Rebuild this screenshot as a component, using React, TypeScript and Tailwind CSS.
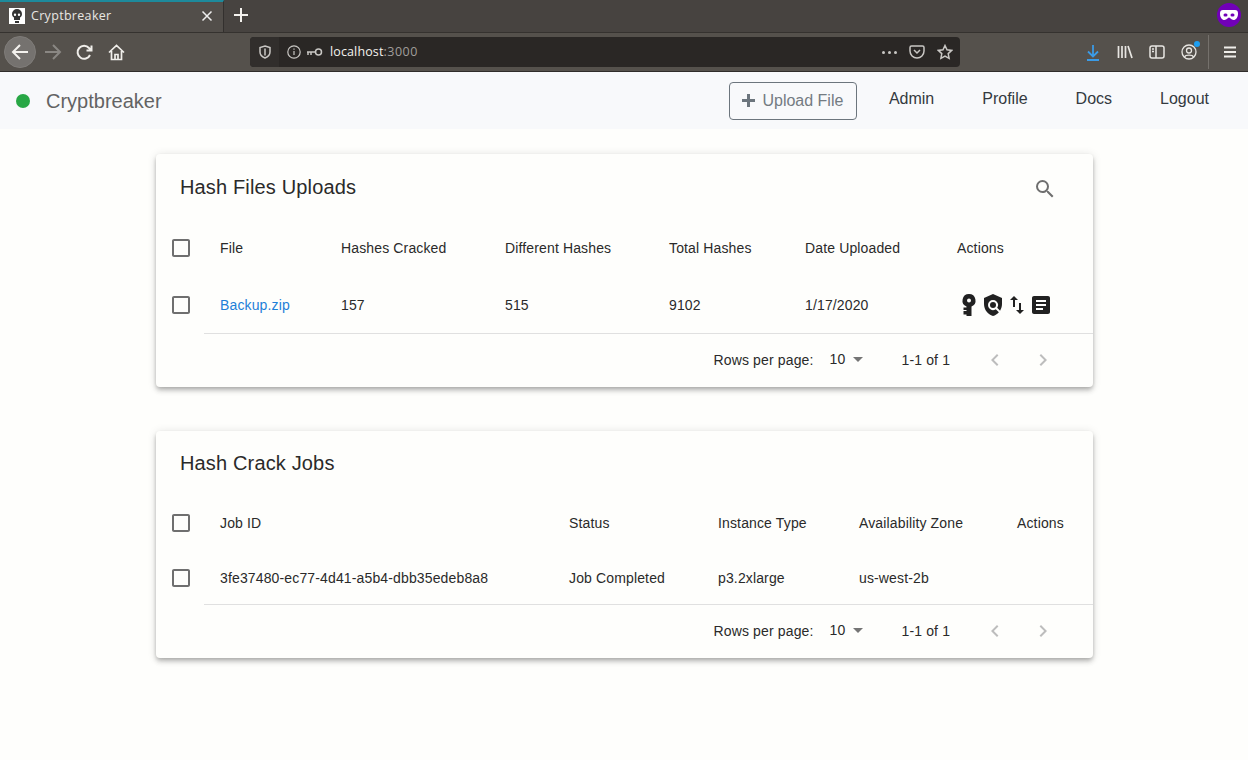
import React from 'react';
import { MdArticle, MdCheckBoxOutlineBlank, MdChevronLeft, MdChevronRight, MdImportExport, MdPolicy, MdSearch, MdArrowDropDown } from 'react-icons/md';

const chrome = { fontFamily: '"Open Sans", "Noto Sans", sans-serif' };

function Checkbox() {
  return <MdCheckBoxOutlineBlank size={24} className="text-[#6f6f6f] shrink-0 ml-[13px]" />;
}

function KeyIcon() {
  return (
    <svg width="24" height="24" viewBox="0 0 24 24" fill="#212121">
      <path fillRule="evenodd" d="M12 1a6.500 6.500 0 0 1 2.500 12.500V23H9.500v-1.500H6.500V18h3v-1H6.500v-2.500h3v-1A6.500 6.500 0 0 1 12 1zm0 4.500a2 2 0 1 0 0 4 2 2 0 0 0 0-4z" />
    </svg>
  );
}

function Footer() {
  return (
    <div className="flex items-center h-[53px] pb-px text-sm text-[#2a2a2a] tracking-[0.01em]">
      <span className="ml-[558px] w-[116px]">Rows per page:</span>
      <span className="w-[16px] -translate-y-px">10</span>
      <MdArrowDropDown size={24} className="text-[#757575] -translate-y-[1px]" />
      <span className="ml-[32px] w-[49px]">1-1 of 1</span>
      <MdChevronLeft size={24} className="text-[#bdbdbd] ml-[32px]" />
      <MdChevronRight size={24} className="text-[#bdbdbd] ml-[24px]" />
    </div>
  );
}

export default function App() {
  return (
    <div className="min-h-screen bg-[#fefefc] font-['Liberation_Sans',Arial,sans-serif]">
      {/* browser chrome */}
      <div className="h-[32px] bg-[#474340] flex text-[#f4f2ee]" style={chrome}>
        <div className="w-[224px] h-[32px] bg-[#524e4a] border-t-2 border-t-[#1d8a9c] flex items-center pb-[2px] pl-[9px] border-r border-r-[#33302e]">
          <div className="w-4 h-4 bg-white flex items-center justify-center">
            <svg width="12" height="14" viewBox="0 0 12 14" fill="#333"><path d="M6 0a5 5 0 0 0-5 5c0 2 1 3 2 3.600V11h6V8.600C10 8 11 7 11 5a5 5 0 0 0-5-5zM4 4.500a1.200 1.200 0 1 1 0 2.400 1.200 1.200 0 0 1 0-2.400zm4 0a1.200 1.200 0 1 1 0 2.400 1.200 1.200 0 0 1 0-2.400zM4 12h4v2H4z"/></svg>
          </div>
          <span className="ml-[6px] text-[12.5px] tracking-wide text-[#e8e6e2]">Cryptbreaker</span>
          <svg className="ml-[89px]" width="12" height="12" viewBox="0 0 12 12" stroke="#eee" strokeWidth="1.5"><path d="M1.500 1.500l9 9M10.500 1.500l-9 9" /></svg>
        </div>
        <svg className="ml-[9px] mt-[7px]" width="16" height="16" viewBox="0 0 16 16" stroke="#f4f2ee" strokeWidth="2"><path d="M8 1v14M1 8h14" /></svg>
        <div className="flex-1" />
        <div className="w-[24px] h-[24px] mt-[3px] mr-[7px] rounded-full bg-[#7100b8] flex items-center justify-center">
          <svg width="18" height="10" viewBox="0 0 18 10"><path fillRule="evenodd" fill="#fff" d="M3 0h12c2 0 3 1 3 3.500C18 7.500 16 10 13.500 10 11 10 10.500 7.500 9 7.500S7 10 4.500 10C2 10 0 7.500 0 3.500 0 1 1 0 3 0zm2 3.500a1.500 1.500 0 1 0 0 3h1a1.500 1.500 0 0 0 0-3zm7 0a1.500 1.500 0 1 0 0 3h1a1.500 1.500 0 0 0 0-3z"/></svg>
        </div>
      </div>
      <div className="h-[40px] bg-[#55514c] border-t border-t-[#35322f] border-b border-b-[#2f2c2a] flex items-center relative" style={chrome}>
        <div className="ml-[4px] w-8 h-8 rounded-full bg-[#75726f] border border-[#7f7c79] flex items-center justify-center">
          <svg width="18" height="18" viewBox="0 0 18 18" fill="none" stroke="#f4f2ee" strokeWidth="2"><path d="M17 9H2M9 2L2 9l7 7" /></svg>
        </div>
        <svg className="ml-[8px]" width="18" height="18" viewBox="0 0 18 18" fill="none" stroke="#8a8783" strokeWidth="2"><path d="M1 9h15M9 2l7 7-7 7" /></svg>
        <svg className="ml-[14px]" width="17" height="17" viewBox="0 0 17 17" fill="none" stroke="#f0eeea" strokeWidth="2"><path d="M14 11a6.500 6.500 0 1 1-1-7l2 2M15.500 1.500V6.500H10.500" /></svg>
        <svg className="ml-[15px]" width="17" height="17" viewBox="0 0 17 17" fill="none" stroke="#f0eeea" strokeWidth="1.700"><path d="M1 8.500L8.500 1.500l7.500 7M3.500 7v8.500h10V7M7 15.500v-5h3v5" /></svg>
        <div className="ml-[125px] w-[710px] h-[30px] bg-[#2a2725] rounded flex items-center text-[#f4f2ee]">
          <div className="w-[29px] h-[30px] bg-[#312e2c] rounded-l flex items-center justify-center">
            <svg width="12" height="14" viewBox="0 0 12 14" fill="none" stroke="#c9c7c4" strokeWidth="1.500"><path d="M6 1l5 1.500V7c0 3-2.500 5-5 6-2.500-1-5-3-5-6V2.500zM6 3.500V10.500" /></svg>
          </div>
          <svg className="ml-[8px]" width="14" height="14" viewBox="0 0 14 14" fill="none" stroke="#c9c7c4" strokeWidth="1.200"><circle cx="7" cy="7" r="6.200"/><path d="M7 6v4M7 3.500v1.300"/></svg>
          <svg className="ml-[5px]" width="17" height="10" viewBox="0 0 17 10" fill="none" stroke="#c9c7c4" strokeWidth="1.500"><circle cx="12.500" cy="5" r="3"/><path d="M9.500 5H1M2 5v3M5 5v3"/></svg>
          <span className="ml-[7px] text-[12.5px] tracking-[0.01em]">localhost<span className="text-[#a09e9b] tracking-[0.04em]">:3000</span></span>
          <div className="flex-1" />
          <span className="flex gap-[3px] mr-[12px]">
            <i className="w-[3px] h-[3px] rounded-full bg-[#c9c7c4]" /><i className="w-[3px] h-[3px] rounded-full bg-[#c9c7c4]" /><i className="w-[3px] h-[3px] rounded-full bg-[#c9c7c4]" />
          </span>
          <svg className="mr-[12px]" width="16" height="14" viewBox="0 0 16 14" fill="none" stroke="#c9c7c4" strokeWidth="1.500"><path d="M1 2.500A1.500 1.500 0 0 1 2.500 1h11A1.500 1.500 0 0 1 15 2.500V6a7 7 0 0 1-14 0zM5 5l3 3 3-3" /></svg>
          <svg className="mr-[7px]" width="16" height="16" viewBox="0 0 16 16" fill="none" stroke="#c9c7c4" strokeWidth="1.500"><path d="M8 1.500l2 4.300 4.700.6-3.500 3.200.9 4.700L8 12l-4.100 2.300.9-4.700-3.500-3.200L6 5.800z" /></svg>
        </div>
        <svg className="ml-[126px]" width="14" height="17" viewBox="0 0 14 17" fill="none" stroke="#3b9be6" strokeWidth="1.800"><path d="M7 1v11M2 7.500l5 5 5-5M1 16h12" /></svg>
        <svg className="ml-[17px]" width="16" height="14" viewBox="0 0 16 14" fill="none" stroke="#e8e6e2" strokeWidth="1.700"><path d="M1.500 1v12M5 1v12M8.500 1v12M11 1l4 12" /></svg>
        <svg className="ml-[16px]" width="16" height="14" viewBox="0 0 16 14" fill="none" stroke="#e8e6e2" strokeWidth="1.500"><rect x="1" y="1" width="14" height="12" rx="2"/><path d="M7 1v12M3 4h2M3 6.500h2" /></svg>
        <div className="relative ml-[16px]">
          <svg width="16" height="16" viewBox="0 0 16 16" fill="none" stroke="#e8e6e2" strokeWidth="1.300"><circle cx="8" cy="8" r="7"/><circle cx="8" cy="6.500" r="2.500"/><path d="M3.500 13c1-2.500 8-2.500 9 0"/></svg>
          <span className="absolute -top-[3px] -right-[3px] w-[6px] h-[6px] rounded-full bg-[#1e9ff2]" />
        </div>
        <div className="ml-[11px] w-px h-[34px] bg-[#75716c]" />
        <svg className="ml-[15px]" width="12" height="12" viewBox="0 0 12 12" stroke="#f0eeea" strokeWidth="1.800"><path d="M0 1.500h12M0 6h12M0 10.500h12" /></svg>
      </div>

      {/* app nav */}
      <nav className="h-[57px] bg-[#f8f9fb] flex items-center">
        <span className="ml-[16px] w-[14px] h-[14px] rounded-full bg-[#28a745]" />
        <span className="ml-[16px] text-[20px] text-[#636363]">Cryptbreaker</span>
        <div className="ml-auto flex items-center">
          <button className="w-[128px] h-[38px] border border-[#6c757d] rounded flex items-center justify-center text-[16px] text-[#737b82] gap-[7px]">
            <svg width="13" height="13" viewBox="0 0 13 13" fill="#6c757d"><path d="M5 0h3v5h5v3H8v5H5V8H0V5h5z" /></svg>
            Upload File
          </button>
          <div className="flex text-[16px] text-[#343a40] -translate-y-[2px] ml-[32px] gap-[48px] mr-[39px]">
            <span>Admin</span><span>Profile</span><span>Docs</span><span>Logout</span>
          </div>
        </div>
      </nav>

      <main className="flex flex-col items-center pt-[25px] gap-[44px]">
        {/* hash files */}
        <section className="w-[937px] bg-[#fefefc] rounded shadow-[0_2px_4px_-1px_rgba(0,0,0,0.2),0_4px_5px_0_rgba(0,0,0,0.14),0_1px_10px_0_rgba(0,0,0,0.12)]">
          <div className="h-[65px] flex items-center pl-[24.5px] pr-[36px] justify-between">
            <h2 className="text-[20px] text-[#2a2a2a] tracking-[0.0075em]">Hash Files Uploads</h2>
            <MdSearch size={24} className="text-[#6f6f6f] mt-[4px]" />
          </div>
          <div className="h-[57px] flex items-center text-sm text-[#2a2a2a] tracking-[0.01em]">
            <Checkbox />
            <span className="ml-[27.500px] w-[121px]">File</span>
            <span className="w-[164px]">Hashes Cracked</span>
            <span className="w-[164px]">Different Hashes</span>
            <span className="w-[136px]">Total Hashes</span>
            <span className="w-[152px]">Date Uploaded</span>
            <span>Actions</span>
          </div>
          <div className="h-[58px] pb-px flex items-center text-sm text-[#2a2a2a] tracking-[0.01em] relative">
            <Checkbox />
            <a className="ml-[27.500px] w-[121px] text-[#1e7fd8]">Backup.zip</a>
            <span className="w-[164px]">157</span>
            <span className="w-[164px]">515</span>
            <span className="w-[136px]">9102</span>
            <span className="w-[152px]">1/17/2020</span>
            <div className="flex text-[#212121]">
              <KeyIcon />
              <MdPolicy size={24} />
              <MdImportExport size={24} />
              <MdArticle size={24} />
            </div>
            <div className="absolute left-[48px] right-0 bottom-0 h-px bg-[#e0e0e0]" />
          </div>
          <Footer />
        </section>

        {/* crack jobs */}
        <section className="w-[937px] bg-[#fefefc] rounded shadow-[0_2px_4px_-1px_rgba(0,0,0,0.2),0_4px_5px_0_rgba(0,0,0,0.14),0_1px_10px_0_rgba(0,0,0,0.12)]">
          <div className="h-[64px] flex items-center pl-[24.5px]">
            <h2 className="text-[20px] text-[#2a2a2a] tracking-[0.0075em]">Hash Crack Jobs</h2>
          </div>
          <div className="h-[56px] flex items-center text-sm text-[#2a2a2a] tracking-[0.01em]">
            <Checkbox />
            <span className="ml-[27.500px] w-[349px]">Job ID</span>
            <span className="w-[149px]">Status</span>
            <span className="w-[141px]">Instance Type</span>
            <span className="w-[158px]">Availability Zone</span>
            <span>Actions</span>
          </div>
          <div className="h-[54px] flex items-center text-sm text-[#2a2a2a] tracking-[0.01em] relative">
            <Checkbox />
            <span className="ml-[27.500px] w-[349px]">3fe37480-ec77-4d41-a5b4-dbb35edeb8a8</span>
            <span className="w-[149px]">Job Completed</span>
            <span className="w-[141px]">p3.2xlarge</span>
            <span className="w-[158px]">us-west-2b</span>
            <div className="absolute left-[48px] right-0 bottom-0 h-px bg-[#e0e0e0]" />
          </div>
          <Footer />
        </section>
      </main>
    </div>
  );
}
